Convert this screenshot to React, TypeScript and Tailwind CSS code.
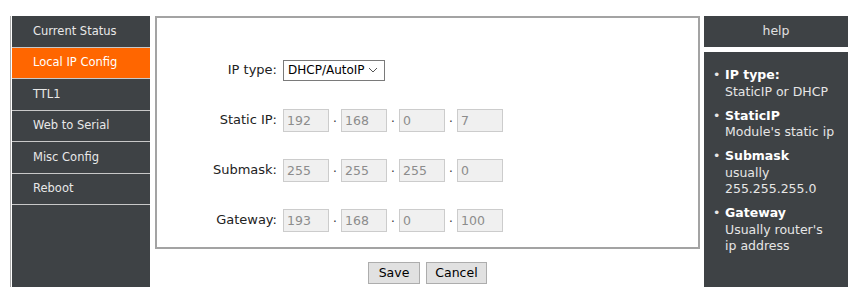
const menu = ['Current Status', 'Local IP Config', 'TTL1', 'Web to Serial', 'Misc Config', 'Reboot']

const rows = [
  { label: 'Static IP:', values: ['192', '168', '0', '7'] },
  { label: 'Submask:', values: ['255', '255', '255', '0'] },
  { label: 'Gateway:', values: ['193', '168', '0', '100'] },
]

const help = [
  { title: 'IP type:', lines: ['StaticIP or DHCP'] },
  { title: 'StaticIP', lines: ["Module's static ip"] },
  { title: 'Submask', lines: ['usually', '255.255.255.0'] },
  { title: 'Gateway', lines: ["Usually router's", 'ip address'] },
]

const IpInputs = ({ values }: { values: string[] }) => {
  return (
    <div className="flex items-center">
      {values.map((v, i) => (
        <div key={i} className="flex items-center">
          {i > 0 && <span className="w-[12px] text-center text-[12px] text-[#333] leading-none pt-[4px]">·</span>}
          <input
            readOnly
            value={v}
            className="w-[46px] h-[23px] bg-[#f0f0f0] border border-[#cccccc] text-[#8c8c8c] text-[12.5px] pl-[3px] outline-none"
          />
        </div>
      ))}
    </div>
  )
}

const App = () => {
  return (
    <div className="w-[860px] h-[302px] bg-white pt-[16px] flex font-['DejaVu_Sans',sans-serif]">
      <div className="ml-[10px] border-l border-[#ababab] pl-[1px] h-[271px]">
        <div className="w-[138px] h-full bg-[#3e4245] flex flex-col">
          {menu.map((m) => (
            <div
              key={m}
              className={`h-[31.5px] flex items-center pl-[21px] text-[11.5px] text-[#e8e8e8] border-b border-[#c8c8c8] ${
                m === 'Local IP Config' ? 'bg-[#ff6600] text-white' : ''
              }`}
            >
              {m}
            </div>
          ))}
        </div>
      </div>

      <div className="ml-[5px] w-[545px] flex flex-col">
        <div className="h-[233px] border-2 border-[#a3a3a3] pt-[27px] text-[13px] text-[#222]">
          <div className="h-[50px] flex items-center">
            <div className="w-[121px] text-right pr-[1px]">IP type:</div>
            <div className="ml-[5px] w-[102px] h-[21px] border border-[#7a7a7a] bg-white flex items-center justify-between pl-[4px] pr-[6px] text-[12px] text-black">
              <span>DHCP/AutoIP</span>
              <svg width="10" height="6" viewBox="0 0 10 6" fill="none" stroke="#555" strokeWidth="1">
                <path d="M1 1l4 4 4-4" />
              </svg>
            </div>
          </div>
          {rows.map((r) => (
            <div key={r.label} className="h-[50px] flex items-center">
              <div className="w-[121px] text-right pr-[1px]">{r.label}</div>
              <div className="ml-[5px]">
                <IpInputs values={r.values} />
              </div>
            </div>
          ))}
        </div>
        <div className="flex justify-center gap-[6px] mt-[13px]">
          <button className="w-[52px] h-[22px] bg-[#e1e1e1] border border-[#adadad] text-[12.5px] text-black">
            Save
          </button>
          <button className="w-[61px] h-[22px] bg-[#e1e1e1] border border-[#adadad] text-[12.5px] text-black">
            Cancel
          </button>
        </div>
      </div>

      <div className="ml-[4px] w-[144px] flex flex-col h-[271px]">
        <div className="h-[31px] bg-[#3e4245] flex items-center justify-center text-[12.5px] text-[#e0e0e0]">
          help
        </div>
        <div className="mt-[5px] flex-1 bg-[#3e4245] pt-[15px] pl-[9px] text-[12.5px] text-[#e6e6e6] leading-[16.5px]">
          <ul className="flex flex-col gap-[7.5px]">
            {help.map((h) => (
              <li key={h.title} className="flex">
                <span className="w-[12px] shrink-0">•</span>
                <div className="flex flex-col">
                  <span className="font-bold text-white">{h.title}</span>
                  {h.lines.map((l) => (
                    <span key={l}>{l}</span>
                  ))}
                </div>
              </li>
            ))}
          </ul>
        </div>
      </div>
    </div>
  )
}

export default App
